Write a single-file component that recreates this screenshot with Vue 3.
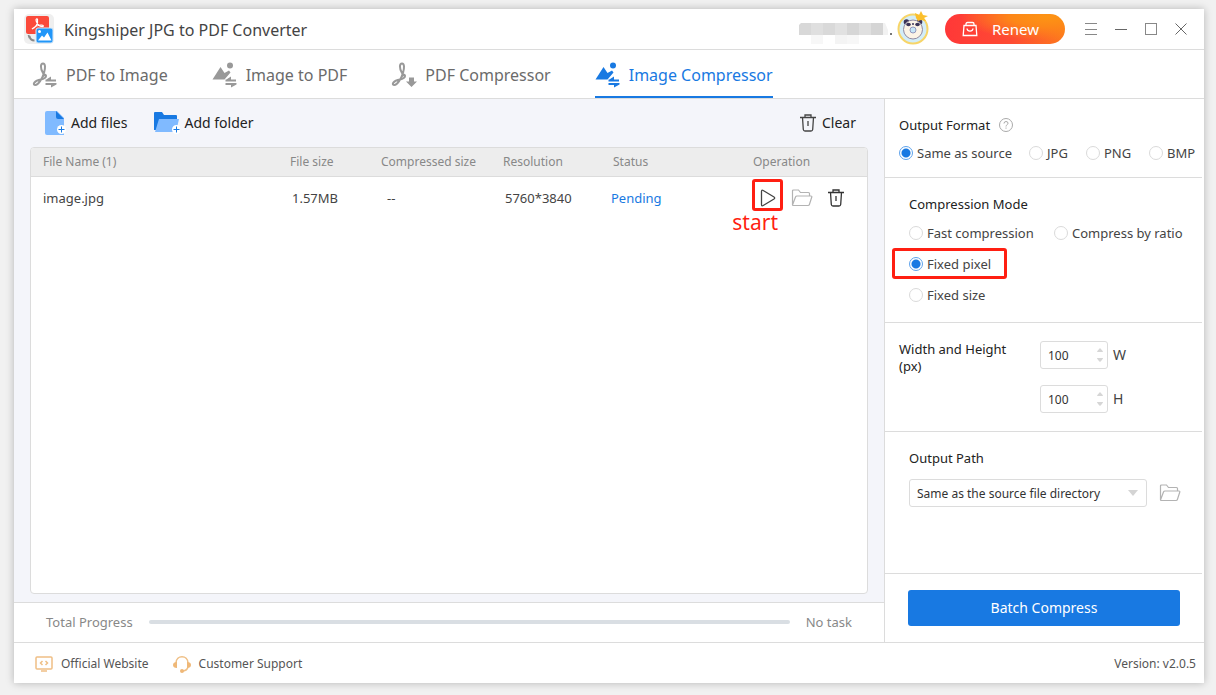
<script setup>
import { ref } from 'vue'

const tabs = [
  { id: 'p2i', label: 'PDF to Image', icon: 'pdf', badge: 'swap' },
  { id: 'i2p', label: 'Image to PDF', icon: 'image', badge: 'swap' },
  { id: 'pc', label: 'PDF Compressor', icon: 'pdf', badge: 'down' },
  { id: 'ic', label: 'Image Compressor', icon: 'image', badge: 'swap' },
]
const activeTab = ref('ic')
const formats = ['Same as source', 'JPG', 'PNG', 'BMP']
const format = ref('Same as source')
const mode = ref('pixel')
const modes = [
  { id: 'fast', label: 'Fast compression' },
  { id: 'ratio', label: 'Compress by ratio' },
  { id: 'pixel', label: 'Fixed pixel' },
  { id: 'size', label: 'Fixed size' },
]
const size = ref({ W: 100, H: 100 })
const files = [
  { name: 'image.jpg', size: '1.57MB', compressed: '--', resolution: '5760*3840', status: 'Pending' },
]
const path = ref('Same as the source file directory')
</script>

<template>
  <div class="window">
    <header class="titlebar">
      <svg class="logo" viewBox="0 0 30 30" aria-hidden="true">
        <rect x="0" y="0" width="30" height="30" rx="5" fill="#efefef" />
        <rect x="2" y="2" width="23" height="18" rx="2" fill="#fb4a3b" />
        <path d="M8 15c4-2 6-6 5.500-9.500c-.4-1.500-2-.6-1.300 1.500c1 3 3 5.500 6 5.600c2-.2 1.300-1.700-1-1.600c-3 .1-6 1-9.200 4z" fill="none" stroke="#fff" stroke-width="1.200" />
        <path d="M4.500 21l1 3M5.500 22c.5 3 2 4.500 5 4.500" fill="none" stroke="#888" stroke-width="1.800" />
        <rect x="12" y="14" width="17" height="15" rx="2" fill="#2196f8" stroke="#d9e9f8" stroke-width="1" />
        <circle cx="15.500" cy="17.500" r="1.500" fill="#fff" />
        <path d="M14 26.500l4-5 2 2 3.500-5 4 8z" fill="#fff" />
      </svg>
      <h1>Kingshiper JPG to PDF Converter</h1>
      <svg class="account" viewBox="0 0 96 24" aria-hidden="true">
        <path d="M2 0h10v12H0V2z" fill="#d8d8d8" />
        <rect x="12" width="12" height="12" fill="#dfdfdf" />
        <rect x="24" width="12" height="12" fill="#d9d9d9" />
        <rect x="36" width="12" height="12" fill="#e1e1e1" />
        <rect x="48" width="12" height="12" fill="#d6d6d6" />
        <rect x="60" width="12" height="12" fill="#e0e0e0" />
        <rect x="72" width="12" height="12" fill="#d5d5d5" />
        <path d="M84 0h2l3 7v5h-5z" fill="#f2f2f2" />
        <rect x="12" y="12" width="12" height="9" fill="#f7f7f7" />
        <rect x="36" y="12" width="12" height="9" fill="#f4f4f4" />
        <rect x="48" y="12" width="12" height="9" fill="#f7f7f7" />
        <rect x="91" y="10" width="2" height="2" fill="#777" />
      </svg>
      <svg class="avatar" viewBox="0 0 32 36" aria-hidden="true">
        <circle cx="16" cy="19" r="14.500" fill="#d3edf8" stroke="#f7d568" stroke-width="2" />
        <circle cx="9.500" cy="12" r="2.800" fill="#3b3458" />
        <circle cx="22.500" cy="12" r="2.800" fill="#3b3458" />
        <circle cx="16" cy="19.500" r="9.500" fill="#fbf3e6" stroke="#8f88a0" stroke-width="1" />
        <ellipse cx="11.500" cy="14.500" rx="2.300" ry="1.800" fill="#3b3458" />
        <ellipse cx="20.500" cy="14.500" rx="2.300" ry="1.800" fill="#3b3458" />
        <circle cx="16" cy="14" r="1" fill="#3b3458" />
        <circle cx="16" cy="20" r="3" fill="#c5e5f7" stroke="#9297bd" stroke-width="1" />
        <path d="M19 8l-1-5 4 2 2-4 2 4 5 1-4 2 2 3-5-1-3 1z" fill="#fbbf2c" />
      </svg>
      <button class="renew">
        <svg width="16" height="16" viewBox="0 0 16 16" fill="none" stroke="#fff" stroke-width="1.300" aria-hidden="true">
          <path d="M2 4.500h12l.8 10H1.200zM4 4.500V3q0-1.500 1.500-1.500h5Q12 1.500 12 3v1.500M5 7.500c.5 3.500 5.500 3.500 6 0" />
        </svg>
        <span>Renew</span>
      </button>
      <nav class="controls" aria-label="Window">
        <button aria-label="Menu"><svg viewBox="0 0 14 14"><path d="M1 1.500h12M1 7.500h12M1 12.500h12" stroke="#888" /></svg></button>
        <button aria-label="Minimize"><svg viewBox="0 0 14 14"><path d="M1 7.500h12" stroke="#666" /></svg></button>
        <button aria-label="Maximize"><svg viewBox="0 0 14 14"><rect x="1.500" y="1.500" width="11" height="11" stroke="#888" /></svg></button>
        <button aria-label="Close"><svg viewBox="0 0 14 14"><path d="M1.500 1.500l11 11M12.500 1.500l-11 11" stroke="#666" /></svg></button>
      </nav>
    </header>

    <nav class="tabs" aria-label="Tools">
      <button v-for="t in tabs" :key="t.id" :class="{ active: t.id === activeTab }" @click="activeTab = t.id">
        <svg width="26" height="26" viewBox="0 0 26 26" aria-hidden="true">
          <path v-if="t.icon === 'pdf'" d="M11 11C8 6 8.500 1.500 11 1.500S13.500 6 12 11C10 17.500 6 23 3.500 23C0 23 2 18.500 9 17.500C12 17 14.500 15.500 14 13.500Q13 12 11.500 14" fill="none" stroke="currentColor" stroke-width="2" stroke-linecap="round" stroke-linejoin="round" />
          <template v-else>
            <circle cx="18" cy="3.500" r="3" fill="currentColor" />
            <path d="M8.500 5l4 6 4.500-2.500 1.500 2-6 7H.5z" fill="currentColor" />
          </template>
          <path v-if="t.badge === 'swap'" d="M19 14.500V19.500H13.500V18zM13.500 17.500H24v2H13.500zM13.500 21H24.500v1.500L19 25.500V23h-5.500z" fill="currentColor" />
          <path v-else d="M18 15.500h5v4h3l-5.500 5.500-5.500-5.500h3z" fill="currentColor" />
        </svg>
        <span>{{ t.label }}</span>
      </button>
    </nav>

    <div class="body">
      <main class="left">
        <div class="toolbar">
          <button class="add">
            <svg width="22" height="25" viewBox="0 0 22 25" aria-hidden="true">
              <path d="M2 0h10l7 7v17H2a2 2 0 0 1-2-2V2a2 2 0 0 1 2-2z" fill="#80baff" />
              <path d="M11 0l8 8h-6a2 2 0 0 1-2-2z" fill="#1879e2" />
              <circle cx="16.500" cy="18.500" r="4.500" fill="#fff" />
              <path d="M16.500 15.500v6M13.500 18.500h6" stroke="#1879e2" />
            </svg>
            <span>Add files</span>
          </button>
          <button class="add">
            <svg width="26" height="25" viewBox="0 0 26 25" aria-hidden="true">
              <path d="M0 2a1 1 0 0 1 1-1h7l2 3h12a1 1 0 0 1 1 1v14H0z" fill="#1879e2" />
              <path d="M5 8h20l-3 13H1z" fill="#80baff" />
              <circle cx="22.500" cy="18.500" r="4.500" fill="#fff" />
              <path d="M22.500 15.500v6M19.500 18.500h6" stroke="#1879e2" />
            </svg>
            <span>Add folder</span>
          </button>
          <button class="clear">
            <svg width="16" height="18" viewBox="0 0 16 18" fill="none" stroke="#444" stroke-width="1.300" aria-hidden="true">
              <path d="M0 3.500h16M5 3V1h6v2M2.500 3.500l.8 12q.2 1.500 1.700 1.500h6q1.500 0 1.700-1.500l.8-12M8 7v5" />
            </svg>
            <span>Clear</span>
          </button>
        </div>

        <div class="tablebox">
          <table>
            <colgroup>
              <col /><col class="c-size" /><col class="c-comp" /><col class="c-res" /><col class="c-stat" /><col class="c-op" />
            </colgroup>
            <thead>
              <tr>
                <th>File Name (1)</th><th>File size</th><th>Compressed size</th><th>Resolution</th><th>Status</th><th>Operation</th>
              </tr>
            </thead>
            <tbody>
              <tr v-for="f in files" :key="f.name">
                <td>{{ f.name }}</td>
                <td class="shift">{{ f.size }}</td>
                <td class="dash">{{ f.compressed }}</td>
                <td class="shift">{{ f.resolution }}</td>
                <td class="status">{{ f.status }}</td>
                <td>
                  <div class="ops">
                    <button class="play" aria-label="Start">
                      <svg width="16" height="18" viewBox="0 0 16 18" fill="none" stroke="#444" stroke-width="1.300" aria-hidden="true">
                        <path d="M1.500 2.500Q1.500.5 3.200 1.500L14 8q1.400 1 0 2L3.200 16.500q-1.700 1-1.700-1z" />
                      </svg>
                      <span class="callout">start</span>
                    </button>
                    <button aria-label="Open folder">
                      <svg width="22" height="18" viewBox="0 0 22 18" fill="none" stroke="#b3b3b3" stroke-width="1.200" aria-hidden="true">
                        <path d="M1.500 16V2q0-1 1-1h5l2 2.500h8q1 0 1 1V7M1.500 16L4.500 8q.4-1 1.500-1h14q1 0 .8 1l-2.400 7.500q-.3 1-1.400 1H2.500q-1 0-1-1" />
                      </svg>
                    </button>
                    <button aria-label="Delete">
                      <svg width="16" height="18" viewBox="0 0 16 18" fill="none" stroke="#333" stroke-width="1.300" aria-hidden="true">
                        <path d="M0 3.500h16M5 3V1h6v2M2.500 3.500l.8 12q.2 1.500 1.700 1.500h6q1.500 0 1.700-1.500l.8-12M8 7v5" />
                      </svg>
                    </button>
                  </div>
                </td>
              </tr>
            </tbody>
          </table>
        </div>

        <div class="progress">
          <span id="total">Total Progress</span>
          <div class="bar" role="progressbar" aria-labelledby="total" aria-valuenow="0"></div>
          <span>No task</span>
        </div>
      </main>

      <aside class="right">
        <section class="sec format">
          <h2>Output Format
            <svg width="16" height="16" viewBox="0 0 16 16" fill="none" stroke="#aaa" aria-hidden="true">
              <circle cx="8" cy="8" r="6.500" />
              <path d="M6 6.500q0-2 2-2t2 1.700q0 1-1 1.600T8 9.500M8 10.500v1.200" />
            </svg>
          </h2>
          <div class="formats">
            <label v-for="f in formats" :key="f"><input v-model="format" type="radio" name="format" :value="f" />{{ f }}</label>
          </div>
        </section>

        <section class="sec mode">
          <h2>Compression Mode</h2>
          <div class="modes">
            <label v-for="m in modes" :key="m.id" :class="m.id"><input v-model="mode" type="radio" name="mode" :value="m.id" />{{ m.label }}</label>
          </div>
        </section>

        <section class="sec dims">
          <h2>Width and Height (px)</h2>
          <div class="fields">
            <div v-for="(v, k) in size" :key="k" class="field">
              <div class="spin">
                <input :id="'dim' + k" v-model="size[k]" type="text" />
                <span class="steps">
                  <button aria-label="Increase" @click="size[k]++"><svg width="6" height="4" viewBox="0 0 6 4"><path d="M0 4q0-1 3-4 3 3 3 4z" fill="#d6d6d6" /></svg></button>
                  <button aria-label="Decrease" @click="size[k]--"><svg width="6" height="4" viewBox="0 0 6 4"><path d="M0 0q0 1 3 4 3-3 3-4z" fill="#d6d6d6" /></svg></button>
                </span>
              </div>
              <label :for="'dim' + k">{{ k }}</label>
            </div>
          </div>
        </section>

        <section class="sec path">
          <h2><label for="path">Output Path</label></h2>
          <div class="pathrow">
            <div class="selectbox">
              <select id="path" v-model="path">
                <option>Same as the source file directory</option>
              </select>
              <svg width="10" height="6" viewBox="0 0 10 6" aria-hidden="true"><path d="M0 0h10L5 6z" fill="#d4d4d4" /></svg>
            </div>
            <button aria-label="Browse">
              <svg width="22" height="18" viewBox="0 0 22 18" fill="none" stroke="#b3b3b3" stroke-width="1.200" aria-hidden="true">
                <path d="M1.500 16V2q0-1 1-1h5l2 2.500h8q1 0 1 1V7M1.500 16L4.500 8q.4-1 1.500-1h14q1 0 .8 1l-2.400 7.500q-.3 1-1.400 1H2.500q-1 0-1-1" />
              </svg>
            </button>
          </div>
        </section>

        <div class="action"><button class="batch">Batch Compress</button></div>
      </aside>
    </div>

    <footer class="footer">
      <a href="#">
        <svg width="18" height="16" viewBox="0 0 18 16" fill="none" stroke="#efbf85" stroke-width="1.500" aria-hidden="true">
          <rect x="1" y="1" width="16" height="12" rx="1" /><path d="M7.500 5L5.500 7l2 2M10.500 5l2 2-2 2M6 15h6" />
        </svg>
        <span>Official Website</span>
      </a>
      <a href="#">
        <svg width="18" height="18" viewBox="0 0 18 18" aria-hidden="true">
          <path d="M3 8C3-.5 15-.5 15 8M15 12q-1 4-6 4" fill="none" stroke="#efbf85" stroke-width="1.500" />
          <path d="M4 7v6q-4 0-4-3t4-3zM14 7v6q4 0 4-3t-4-3z" fill="#efb878" />
          <circle cx="9" cy="16" r="2" fill="#efb878" />
        </svg>
        <span>Customer Support</span>
      </a>
      <span class="version">Version: v2.0.5</span>
    </footer>
  </div>
</template>

<style>
body {
  background: #f1f1f1;
}
</style>

<style scoped>
* {
  box-sizing: border-box;
}
.window {
  display: flex;
  flex-direction: column;
  min-height: calc(100vh - 21px);
  margin: 9px 12px 12px 14px;
  background: #fff;
  box-shadow: 0 0 8px rgba(0, 0, 0, 0.25);
  font-family: "Noto Sans", "Open Sans", sans-serif;
  font-size: 13px;
  line-height: 18px;
  color: #444;
}
button {
  display: flex;
  align-items: center;
  padding: 0;
  border: 0;
  background: none;
  font: inherit;
  color: inherit;
  cursor: pointer;
}
svg {
  display: block;
  flex: none;
}
h1,
h2 {
  margin: 0;
  font-weight: 400;
}
.titlebar {
  display: flex;
  align-items: center;
  height: 41px;
  padding: 0 8px 0 10px;
  border-bottom: 1px solid #dcdcdc;
}
.logo {
  width: 30px;
  height: 30px;
}
h1 {
  margin: 2px auto 0 10px;
  font-size: 16px;
  line-height: 22px;
}
.account {
  width: 96px;
  height: 24px;
  margin-top: 12px;
}
.avatar {
  width: 32px;
  height: 36px;
  margin: 0 16px 2px 2px;
}
.renew {
  justify-content: center;
  gap: 14px;
  width: 120px;
  height: 30px;
  margin-right: 11px;
  padding-right: 9px;
  border-radius: 15px;
  background: radial-gradient(ellipse at 85% 10%, #fd9414 0%, #fd8718 25%, rgba(253, 120, 28, 0) 60%), linear-gradient(90deg, #ff3838, #fe4b33 55%, #fd7a1d);
  color: #fff;
  font-size: 15px;
}
.controls {
  display: flex;
}
.controls button {
  justify-content: center;
  width: 30px;
  height: 30px;
}
.controls svg {
  width: 14px;
  height: 14px;
  fill: none;
}
.tabs {
  display: flex;
  gap: 44px;
  height: 49px;
  padding-left: 18px;
  border-bottom: 1px solid #dcdcdc;
  font-size: 16px;
  color: #6b6b6b;
}
.tabs button {
  gap: 8px;
  height: 48px;
  padding-top: 3px;
  border-bottom: 2px solid transparent;
}
.tabs svg {
  color: #999;
}
.tabs .active,
.tabs .active svg {
  color: #1879e2;
}
.tabs .active {
  border-color: #1879e2;
}
.body {
  display: flex;
  flex: 1;
}
.left {
  display: flex;
  flex: 1;
  flex-direction: column;
  min-width: 0;
  background: #f4f5fa;
}
.toolbar {
  display: flex;
  align-items: center;
  gap: 27px;
  height: 48px;
  padding: 0 28px 0 31px;
  font-size: 14px;
  color: #222;
}
.add {
  gap: 4px;
}
.clear {
  gap: 6px;
  margin-left: auto;
}
.tablebox {
  flex: 1;
  margin: 0 16px 8px;
  border: 1px solid #dcdcdc;
  border-radius: 4px;
  background: #fff;
  overflow: hidden;
}
table {
  width: 100%;
  table-layout: fixed;
  border-collapse: collapse;
}
.c-size {
  width: 91px;
}
.c-comp {
  width: 122px;
}
.c-res {
  width: 110px;
}
.c-stat {
  width: 140px;
}
.c-op {
  width: 126px;
}
th {
  height: 28px;
  padding: 0 0 0 12px;
  border-bottom: 1px solid #dcdcdc;
  background: #ededed;
  font-size: 12px;
  font-weight: 400;
  text-align: left;
  white-space: nowrap;
  color: #888;
}
td {
  height: 43px;
  padding: 0 0 0 12px;
  white-space: nowrap;
}
.shift {
  padding-left: 14px;
}
.dash {
  padding-left: 18px;
}
.status {
  padding-left: 10px;
  color: #1879e2;
}
.ops {
  display: flex;
  align-items: center;
  gap: 8px;
}
.ops button {
  justify-content: center;
}
.ops .play {
  position: relative;
  width: 31px;
  height: 31px;
  margin-left: -1px;
}
.play::after {
  content: "";
  position: absolute;
  inset: -3px 0 2px;
  border: 3px solid #ff1f12;
  border-radius: 3px;
}
.callout {
  position: absolute;
  top: 27px;
  right: 5px;
  font-size: 21px;
  line-height: 26px;
  color: #ff1f12;
}
.ops button:last-child {
  margin-left: 7px;
}
.progress {
  display: flex;
  align-items: center;
  gap: 16px;
  height: 40px;
  padding: 0 32px 2px;
  border-top: 1px solid #dcdcdc;
  background: #fff;
  color: #888;
}
.bar {
  flex: 1;
  height: 4px;
  border-radius: 2px;
  background: #d9dee3;
}
.right {
  display: flex;
  flex-direction: column;
  width: 320px;
  border-left: 1px solid #dcdcdc;
}
.sec {
  margin-right: 2px;
  border-bottom: 1px solid #dcdcdc;
}
h2 {
  display: flex;
  align-items: center;
  font-size: 13px;
  line-height: 18px;
  color: #222;
}
h2 svg {
  margin-left: 8px;
}
.format {
  height: 79px;
  padding: 17px 0 0 14px;
}
.formats {
  display: grid;
  grid-template-columns: 130px 57px 63px 1fr;
  margin-top: 10px;
}
.formats label,
.modes label {
  display: flex;
  align-items: center;
  gap: 4px;
  white-space: nowrap;
}
input[type="radio"] {
  flex: none;
  appearance: none;
  width: 14px;
  height: 14px;
  margin: 0;
  border: 1px solid #dadada;
  border-radius: 50%;
}
input[type="radio"]:checked {
  border-color: #5ea3ec;
  background: radial-gradient(circle, #1879e2 4px, #fff 5px);
}
.mode {
  height: 145px;
  padding: 17px 0 0 24px;
}
.modes {
  display: grid;
  grid-template-columns: 145px 1fr;
  grid-auto-rows: 31px;
  margin-top: 4px;
}
.pixel {
  position: relative;
  grid-column: 1;
}
.pixel::after {
  content: "";
  position: absolute;
  inset: 0 47px 0 -17px;
  border: 3px solid #ff1f12;
  border-radius: 3px;
}
.size {
  grid-column: 1;
}
.dims {
  display: flex;
  height: 109px;
  padding: 18px 0 0 14px;
}
.dims h2 {
  align-self: flex-start;
  width: 141px;
  padding-right: 20px;
  line-height: 17px;
}
.fields {
  display: flex;
  flex-direction: column;
  gap: 16px;
}
.field {
  display: flex;
  align-items: center;
  gap: 5px;
  font-size: 14px;
}
.spin {
  position: relative;
  width: 68px;
  height: 28px;
}
.spin input {
  width: 100%;
  height: 100%;
  padding: 0 20px 0 7px;
  border: 1px solid #dcdcdc;
  border-radius: 3px;
  background: #fff;
  font: inherit;
  font-size: 12px;
  color: #333;
}
.steps {
  position: absolute;
  top: 0;
  right: 5px;
  display: flex;
  flex-direction: column;
  justify-content: center;
  gap: 6px;
  height: 100%;
}
.path {
  flex: 1;
  padding: 17px 0 0 24px;
}
.pathrow {
  display: flex;
  align-items: center;
  gap: 12px;
  margin-top: 12px;
  padding-right: 21px;
}
.selectbox {
  position: relative;
  flex: 1;
}
.selectbox svg {
  position: absolute;
  top: 11px;
  right: 9px;
  pointer-events: none;
}
select {
  appearance: none;
  width: 100%;
  height: 28px;
  padding: 1px 20px 0 7px;
  border: 1px solid #dcdcdc;
  border-radius: 3px;
  background: #fff;
  font: inherit;
  font-size: 12px;
  color: #333;
}
.action {
  padding: 16px 24px 16px 23px;
}
.batch {
  justify-content: center;
  width: 100%;
  height: 36px;
  border-radius: 3px;
  background: #1879e2;
  font-size: 14px;
  color: #fff;
}
.footer {
  display: flex;
  align-items: center;
  gap: 24px;
  height: 41px;
  padding: 1px 8px 0 21px;
  border-top: 1px solid #dcdcdc;
  font-size: 12px;
  color: #555;
}
.footer a {
  display: flex;
  align-items: center;
  gap: 8px;
  color: inherit;
  text-decoration: none;
}
.version {
  margin-left: auto;
}
</style>
